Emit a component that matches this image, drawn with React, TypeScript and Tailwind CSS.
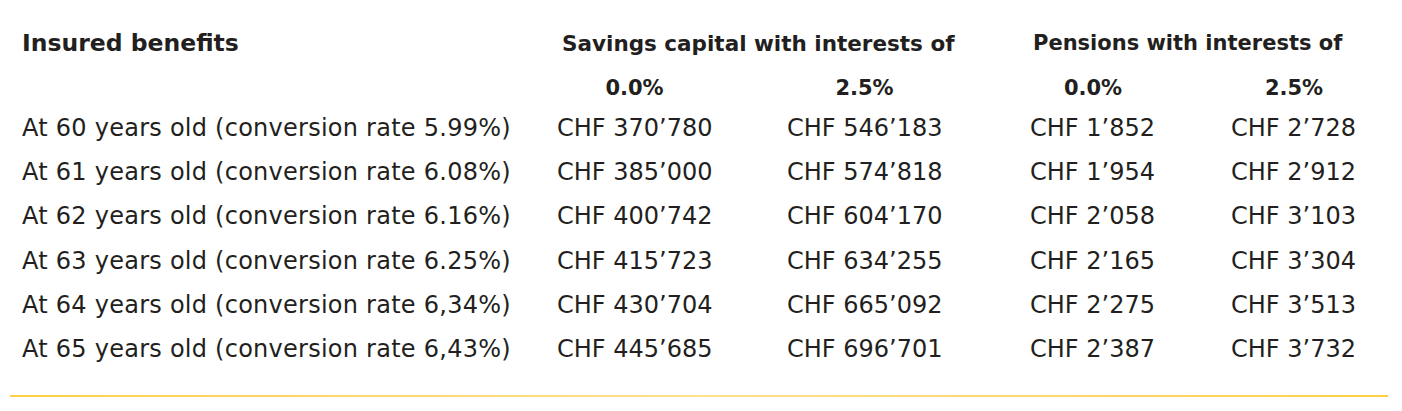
import React from "react";

const rows = [
  { age: 60, rate: "5.99%", s0: "370’780", s25: "546’183", p0: "1’852", p25: "2’728" },
  { age: 61, rate: "6.08%", s0: "385’000", s25: "574’818", p0: "1’954", p25: "2’912" },
  { age: 62, rate: "6.16%", s0: "400’742", s25: "604’170", p0: "2’058", p25: "3’103" },
  { age: 63, rate: "6.25%", s0: "415’723", s25: "634’255", p0: "2’165", p25: "3’304" },
  { age: 64, rate: "6,34%", s0: "430’704", s25: "665’092", p0: "2’275", p25: "3’513" },
  { age: 65, rate: "6,43%", s0: "445’685", s25: "696’701", p0: "2’387", p25: "3’732" },
];

export default function App() {
  return (
    <div
      className="w-[1402px] h-[411px] bg-white text-[#231f20] overflow-hidden"
      style={{ fontFamily: "'DejaVu Sans', sans-serif" }}
    >
      <div className="pt-[21px] pl-[22px]">
        {/* ── Header row ── */}
        <div className="grid grid-cols-[535px_473px_auto] h-[46px] items-center font-bold whitespace-nowrap">
          <div className="text-[23.5px]">Insured benefits</div>
          <div className="pl-[5px] text-[21.5px]">Savings capital with interests of</div>
          <div className="pl-[3px] text-[21px]">Pensions with interests of</div>
        </div>

        {/* ── Interest rates ── */}
        <div className="grid grid-cols-[535px_230px_243px_201px_auto] h-[39px] items-end pb-[2px] text-[21px] font-bold">
          <div />
          <div className="w-[155px] text-center">0.0%</div>
          <div className="w-[155px] text-center">2.5%</div>
          <div className="w-[126px] text-center">0.0%</div>
          <div className="w-[126px] text-center">2.5%</div>
        </div>

        {/* ── Data rows ── */}
        {rows.map((r) => (
          <div
            key={r.age}
            className="grid grid-cols-[535px_230px_243px_201px_auto] h-[44.2px] items-center text-[24px] whitespace-nowrap"
          >
            <div className="tracking-[0.25px]">At {r.age} years old (conversion rate {r.rate})</div>
            <div>CHF {r.s0}</div>
            <div>CHF {r.s25}</div>
            <div>CHF {r.p0}</div>
            <div>CHF {r.p25}</div>
          </div>
        ))}
      </div>

      {/* ── Bottom rule ── */}
      <div className="mt-[24px] ml-[10px] w-[1378px] h-[2px] bg-gradient-to-r from-[#fcd045] via-[#fde08a] to-[#fcd045]" />
    </div>
  );
}
